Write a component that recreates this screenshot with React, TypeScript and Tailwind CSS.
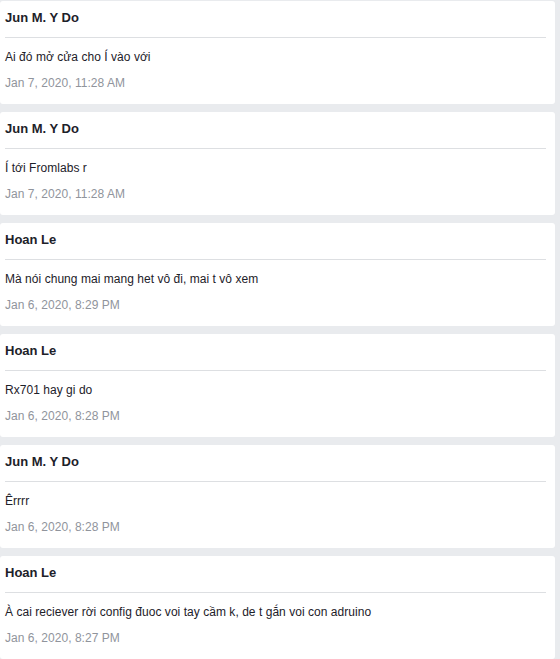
import React from 'react';

interface Comment {
    author: string;
    text: string;
    time: string;
}

const comments: Comment[] = [
    { author: 'Jun M. Y Do', text: 'Ai đó mở cửa cho Í vào với', time: 'Jan 7, 2020, 11:28 AM' },
    { author: 'Jun M. Y Do', text: 'Í tới Fromlabs r', time: 'Jan 7, 2020, 11:28 AM' },
    { author: 'Hoan Le', text: 'Mà nói chung mai mang het vô đi, mai t vô xem', time: 'Jan 6, 2020, 8:29 PM' },
    { author: 'Hoan Le', text: 'Rx701 hay gi do', time: 'Jan 6, 2020, 8:28 PM' },
    { author: 'Jun M. Y Do', text: 'Êrrrr', time: 'Jan 6, 2020, 8:28 PM' },
    { author: 'Hoan Le', text: 'À cai reciever rời config đuoc voi tay cầm k, de t gắn voi con adruino', time: 'Jan 6, 2020, 8:27 PM' },
];

const CommentCard: React.FC<{ comment: Comment }> = ({ comment }) => (
    <div className="w-[555px] h-[103px] bg-white rounded-[3px] shrink-0">
        <div className="ml-[5px] mr-[9px] pt-[9px] pb-[11px] border-b border-[#dddfe2]">
            <h4 className="text-[13px] leading-[16px] font-bold text-[#1d2129]">{comment.author}</h4>
        </div>
        <div className="px-[5px] pt-[11px] tracking-[0.04px]">
            <p className="text-[12px] leading-[16px] text-[#1d2129]">{comment.text}</p>
            <div className="mt-[10px] text-[12px] leading-[16px] text-[#90949c]">{comment.time}</div>
        </div>
    </div>
);

export default function App() {
    return (
        <div className="w-[560px] h-[659px] overflow-hidden bg-[#e9ebee] pt-px flex flex-col gap-[8px] font-['Liberation_Sans',Arial,sans-serif]">
            {comments.map((c, i) => (
                <CommentCard key={i} comment={c} />
            ))}
        </div>
    );
}
